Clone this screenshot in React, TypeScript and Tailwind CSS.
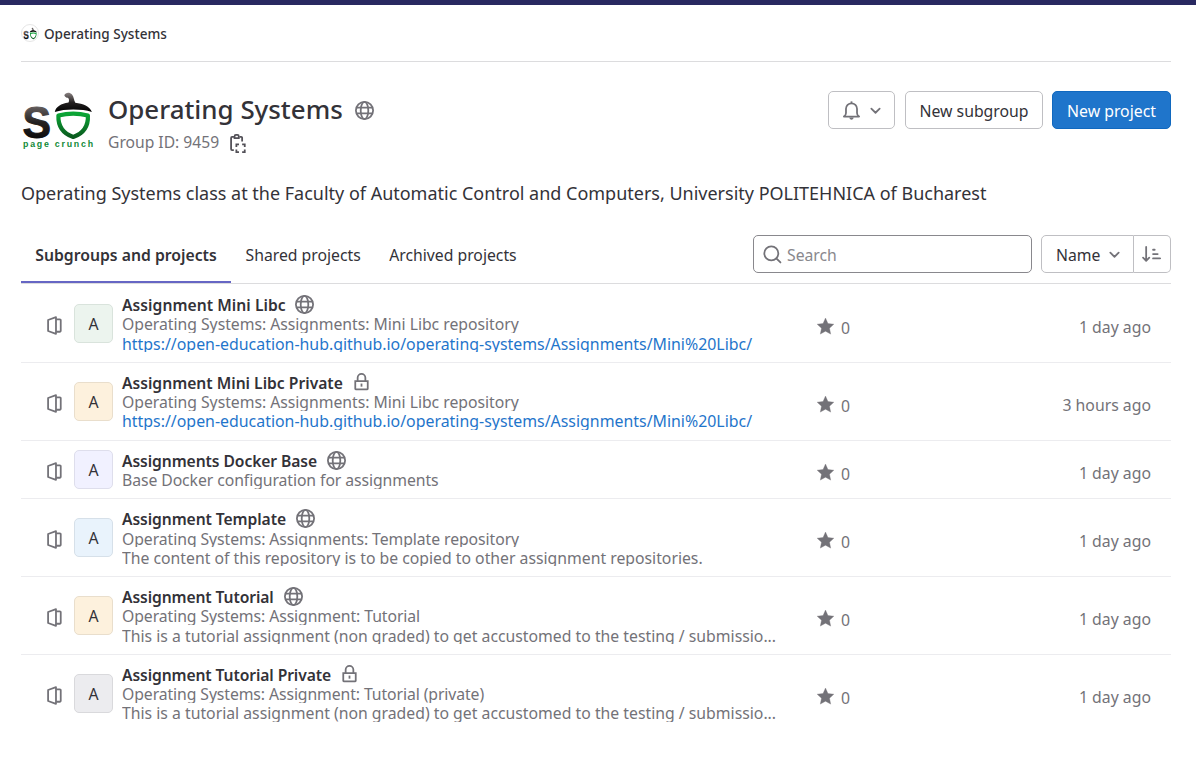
import type { ReactNode } from 'react';

type IconProps = { className?: string };

function Icon({ className = '', children }: IconProps & { children: ReactNode }) {
  return (
    <svg
      viewBox="0 0 16 16"
      fill="none"
      stroke="currentColor"
      strokeWidth="1.5"
      className={`block shrink-0 ${className}`}
      aria-hidden="true"
    >
      {children}
    </svg>
  );
}

const Earth = ({ className = 'size-[19px]' }: IconProps) => (
  <Icon className={className}>
    <circle cx="8" cy="8" r="7.25" />
    <ellipse cx="8" cy="8" rx="3.2" ry="7.25" />
    <path d="M1.2 5.5h13.6M1.2 10.5h13.6" />
  </Icon>
);

const Lock = ({ className = 'size-[19px]' }: IconProps) => (
  <Icon className={className}>
    <path d="M4.75 6.5V4a3.25 3.25 0 0 1 6.5 0v2.5M2.75 6.75h10.5v6.6a.4.4 0 0 1-.4.4H3.15a.4.4 0 0 1-.4-.4z" />
    <path d="M8 8.9v2.6" />
  </Icon>
);

const Project = ({ className = 'size-[19px]' }: IconProps) => (
  <Icon className={className}>
    <path d="M2.6 3.4 9.25.95v14.1L2.6 12.6z" strokeLinejoin="round" />
    <path d="M9.4 2.75h3.1a.75.75 0 0 1 .75.75v9a.75.75 0 0 1-.75.75H9.4" />
  </Icon>
);

const Star = ({ className = 'size-[19px]' }: IconProps) => (
  <Icon className={className}>
    <path
      d="M8 .9 10.05 5.5 15 6.05 11.35 9.4 12.35 14.4 8 11.9 3.65 14.4 4.65 9.4 1 6.05 5.95 5.5z"
      fill="currentColor"
      strokeWidth=".3"
      strokeLinejoin="round"
    />
  </Icon>
);

const Bell = ({ className = 'size-[19px]' }: IconProps) => (
  <Icon className={className}>
    <path
      d="M1.6 13.1c.9-.6 1.75-1.5 1.75-3.1V6.6a4.65 4.65 0 0 1 9.3 0V10c0 1.6.85 2.5 1.75 3.1z"
      strokeLinejoin="round"
    />
    <path d="M8 .3v1.6" />
    <path d="M6.2 13.8h3.6c0 1-.8 1.9-1.8 1.9s-1.8-.9-1.8-1.9z" fill="currentColor" stroke="none" />
  </Icon>
);

const Chevron = ({ className = 'size-[19px]' }: IconProps) => (
  <Icon className={className}>
    <path d="M4.5 6.5 8 9.9l3.5-3.4" strokeLinecap="round" strokeLinejoin="round" />
  </Icon>
);

const Search = ({ className = 'size-[19px]' }: IconProps) => (
  <Icon className={className}>
    <circle cx="7" cy="7" r="5.9" />
    <path d="m11.2 11.2 3.5 3.5" strokeLinecap="round" />
  </Icon>
);

const Sort = ({ className = 'size-[19px]' }: IconProps) => (
  <Icon className={className}>
    <path d="M3.5 1.6v11.6M.9 10.7l2.6 2.6 2.6-2.6" strokeLinecap="round" strokeLinejoin="round" />
    <path d="M9.3 4h1.4M9.3 7.6h3.9M9.3 11.3h6" strokeLinecap="round" />
  </Icon>
);

const Paste = ({ className = 'size-[19px]' }: IconProps) => (
  <Icon className={className}>
    <path d="M5 2.5H3.4a.8.8 0 0 0-.8.8v9.4a.8.8 0 0 0 .8.8h1.5M9.700 2.500h1.400a.8.8 0 0 1 .8.8v3" />
    <path d="M5.500 3.400V2a1.200 1.200 0 0 1 1.200-1.200h1.200A1.200 1.200 0 0 1 9.100 2v1.400z" />
    <path d="M7.050 11V8.800h2.200M11.900 8.800h2.200V11M14.100 13v2.200h-2.200M9.250 15.200h-2.200V13" />
  </Icon>
);

function Logo({ className = '', id, caption = true }: IconProps & { id: string; caption?: boolean }) {
  return (
    <svg
      viewBox={caption ? '0 0 77 62' : '0 0 76 52'}
      preserveAspectRatio="none"
      className={`block shrink-0 ${className}`}
      aria-hidden="true"
    >
      <defs>
        <linearGradient id={`${id}-ink`} x1="0" y1="0" x2="0" y2="1">
          <stop offset="0" stopColor="#8a8282" />
          <stop offset=".5" stopColor="#242121" />
          <stop offset="1" stopColor="#000" />
        </linearGradient>
        <linearGradient id={`${id}-leaf`} x1="0" y1="0" x2="0" y2="1">
          <stop offset="0" stopColor="#0aa535" />
          <stop offset="1" stopColor="#0a5a1e" />
        </linearGradient>
      </defs>
      <text
        x="1.5"
        y="48"
        fontSize="45"
        fontWeight="700"
        fontFamily="Liberation Sans, Arial, sans-serif"
        textLength="28.5"
        lengthAdjust="spacingAndGlyphs"
        fill={`url(#${id}-ink)`}
        stroke={`url(#${id}-ink)`}
        strokeWidth="1"
        strokeLinejoin="round"
      >
        S
      </text>
      <path
        d="M43.3 5.2c1-2.8 5.3-3.4 7.7-.8 1.9 2 1.7 5.2 3.3 8.3 7.8.8 14.4 3.6 16.6 9.3-5.6-2-11.3-2.6-18.6-2.6-6.7 0-13.5.7-18.500 2.700 1.200-5.500 6.100-8.300 13.700-9.500.9-2.100.6-3.800-.5-4.900-1 .1-2.900-.5-3.700-2.500z"
        fill={`url(#${id}-ink)`}
      />
      <path
        d="M37.400 25.500c9.500-2.300 20.200-2.300 29.500 0 .5 11-4 17.800-14.700 21.500C41.500 43.300 37 36.500 37.400 25.500z"
        fill="none"
        stroke={`url(#${id}-leaf)`}
        strokeWidth="4.2"
        strokeLinejoin="round"
      />
      {caption && (
        <text
          x="2"
          y="57.3"
          fontSize="8.8"
          fontWeight="700"
          fontFamily="Liberation Sans, Arial, sans-serif"
          textLength="70"
          fill="#118a37"
        >
          page crunch
        </text>
      )}
    </svg>
  );
}

type Row = {
  name: string;
  nameClass: string;
  locked?: boolean;
  lines: { text: string; className: string }[];
  avatar: string;
  time: string;
};

const docs = 'https://open-education-hub.github.io/operating-systems/Assignments/Mini%20Libc/';
const tutorial = 'This is a tutorial assignment (non graded) to get accustomed to the testing / submissio...';

const rows: Row[] = [
  {
    name: 'Assignment Mini Libc',
    nameClass: 'w-[164px] tracking-[0.05px] pt-px',
    lines: [
      {
        text: 'Operating Systems: Assignments: Mini Libc repository',
        className: 'text-[15.78px] tracking-[-0.025px] leading-[20px]',
      },
      { text: docs, className: 'text-[15.9px] leading-[22px] text-[#1f75cb]' },
    ],
    avatar: 'bg-[#ecf4ee] border-[#d9e3dc]',
    time: '1 day ago',
  },
  {
    name: 'Assignment Mini Libc Private',
    nameClass: 'w-[221px] pt-px',
    locked: true,
    lines: [
      {
        text: 'Operating Systems: Assignments: Mini Libc repository',
        className: 'text-[15.78px] tracking-[-0.025px] leading-[20px]',
      },
      { text: docs, className: 'text-[15.9px] leading-[20px] text-[#1f75cb]' },
    ],
    avatar: 'bg-[#fdf1dd] border-[#e9decc]',
    time: '3 hours ago',
  },
  {
    name: 'Assignments Docker Base',
    nameClass: 'w-[196px] tracking-[-0.08px] pt-[3px]',
    lines: [
      {
        text: 'Base Docker configuration for assignments',
        className: 'text-[15.78px] tracking-[-0.08px] leading-[22px]',
      },
    ],
    avatar: 'bg-[#f1f1ff] border-[#dedeec]',
    time: '1 day ago',
  },
  {
    name: 'Assignment Template',
    nameClass: 'w-[165px] tracking-[-0.08px] pt-px',
    lines: [
      {
        text: 'Operating Systems: Assignments: Template repository',
        className: 'text-[15.78px] tracking-[-0.07px] leading-[22px]',
      },
      {
        text: 'The content of this repository is to be copied to other assignment repositories.',
        className: 'text-[15.78px] leading-[22px]',
      },
    ],
    avatar: 'bg-[#e9f3fc] border-[#d6e0e9]',
    time: '1 day ago',
  },
  {
    name: 'Assignment Tutorial',
    nameClass: 'w-[153px] tracking-[-0.1px] pt-px',
    lines: [
      {
        text: 'Operating Systems: Assignment: Tutorial',
        className: 'text-[15.78px] tracking-[-0.08px] leading-[20px]',
      },
      { text: tutorial, className: 'text-[15.79px] leading-[22px]' },
    ],
    avatar: 'bg-[#fdf1dd] border-[#e9decc]',
    time: '1 day ago',
  },
  {
    name: 'Assignment Tutorial Private',
    nameClass: 'w-[209px] tracking-[-0.1px] pt-px',
    locked: true,
    lines: [
      {
        text: 'Operating Systems: Assignment: Tutorial (private)',
        className: 'text-[15.78px] tracking-[-0.09px] leading-[20px]',
      },
      { text: tutorial, className: 'text-[15.79px] leading-[20px]' },
    ],
    avatar: 'bg-[#ececef] border-[#d9d9dc]',
    time: '1 day ago',
  },
];

function ProjectRow({ row, first, last }: { row: Row; first: boolean; last: boolean }) {
  const single = row.lines.length === 1;
  return (
    <li
      className={`flex items-center border-b pl-6 pr-5 ${last ? 'border-transparent' : 'border-[#ececef]'} ${
        first ? 'h-[79px] pt-px' : single ? 'h-[58px]' : 'h-[78px]'
      }`}
    >
      <Project className="mt-[3px] size-[19px]" />
      <div
        className={`ml-[10px] flex size-[39px] items-center justify-center rounded-[5px] border pt-px text-[15.8px] leading-5 text-[#333238] ${row.avatar}`}
      >
        A
      </div>
      <div className="ml-[9px] w-[670px] shrink-0">
        <div className="flex h-[19px] items-center">
          <span
            className={`shrink-0 whitespace-nowrap text-[15.65px] font-semibold leading-5 text-[#333238] ${row.nameClass}`}
          >
            {row.name}
          </span>
          {row.locked ? <Lock className="ml-[9px] size-[19px]" /> : <Earth className="ml-[9px] mt-px size-[19px]" />}
        </div>
        {row.lines.map((line) => (
          <p key={line.text} className={`h-[19.4px] overflow-hidden whitespace-nowrap ${line.className}`}>
            {line.text}
          </p>
        ))}
      </div>
      <div className="ml-6 mt-[9px] flex items-center gap-[6px] text-[15.8px]">
        <Star className="mb-[4px] size-[19px]" />
        <span className="pt-[2px]">0</span>
      </div>
      <time className="ml-auto mt-[8px] text-[15.8px]">{row.time}</time>
    </li>
  );
}

export default function App() {
  return (
    <div className="h-[757px] w-full overflow-hidden border-t-[5px] border-[#292961] bg-white font-['Noto_Sans',sans-serif] text-[#333238]">
      <main className="ml-[21px] mr-[25px]">
        <nav className="flex h-[57px] items-center border-b border-[#dcdcde] text-[13.55px] font-medium">
          <span className="flex size-[18px] items-center justify-center overflow-hidden rounded-full border border-[#e6e6e6]">
            <Logo id="crumb" caption={false} className="h-[13px] w-[15px]" />
          </span>
          <span className="ml-[5px] pt-[2px]">Operating Systems</span>
        </nav>

        <header className="flex h-[118px] pt-[27px]">
          <Logo id="group" className="mt-px h-[62px] w-[77px]" />
          <div className="ml-[10px]">
            <div className="flex h-[42px] items-center">
              <h1 className="-mt-[2px] text-[25.9px] font-medium">Operating Systems</h1>
              <Earth className="ml-3 size-[19px] text-[#737278]" />
            </div>
            <div className="flex h-[22px] items-center text-[15.65px] text-[#737278]">
              <span className="pt-[2px]">Group ID: 9459</span>
              <Paste className="ml-[9px] mt-[3px] size-[19px] text-[#535158]" />
            </div>
          </div>
          <div className="ml-auto mt-[2px] flex h-[38px] gap-[10px] text-[15.8px]">
            <button className="flex w-[67px] items-center rounded-[5px] border border-[#bfbfc3] pl-[13px] text-[#737278]">
              <Bell />
              <Chevron className="ml-[5px] size-[19px]" />
            </button>
            <button className="w-[138px] rounded-[5px] border border-[#bfbfc3] pt-[3px]">New subgroup</button>
            <button className="-ml-px w-[119px] rounded-[5px] border border-[#1068bf] bg-[#1f75cb] pt-[3px] text-white">
              New project
            </button>
          </div>
        </header>

        <p className="h-[55px] whitespace-nowrap text-[17.99px] leading-[27px]">
          Operating Systems class at the Faculty of Automatic Control and Computers, University POLITEHNICA of Bucharest
        </p>

        <div className="flex h-[49px] border-b border-[#dcdcde] text-[15.75px]">
          <div className="h-[48px] w-[210px] border-b-2 border-[#6666c4] pt-[9px] text-center font-semibold">
            Subgroups and projects
          </div>
          <div className="ml-[14.5px] pt-[9px]">Shared projects</div>
          <div className="ml-[28.5px] pt-[9px]">Archived projects</div>
          <div className="ml-auto flex h-[38px]">
            <div className="flex w-[279px] items-center rounded-[5px] border border-[#89888d] pl-[9px] text-[#89888d]">
              <Search className="size-[19px] text-[#737278]" />
              <span className="ml-[5px] pt-[3px]">Search</span>
            </div>
            <div className="ml-[9px] flex w-[93px] items-center rounded-l-[5px] border border-[#bfbfc3] pl-[14px]">
              <span className="pt-[3px]">Name</span>
              <Chevron className="ml-[5px] size-[19px] text-[#737278]" />
            </div>
            <div className="flex w-[37px] items-center rounded-r-[5px] border border-l-0 border-[#bfbfc3] pl-2 text-[#737278]">
              <Sort />
            </div>
          </div>
        </div>

        <ul className="text-[#737278]">
          {rows.map((row, i) => (
            <ProjectRow key={row.name} row={row} first={i === 0} last={i === rows.length - 1} />
          ))}
        </ul>
      </main>
    </div>
  );
}
